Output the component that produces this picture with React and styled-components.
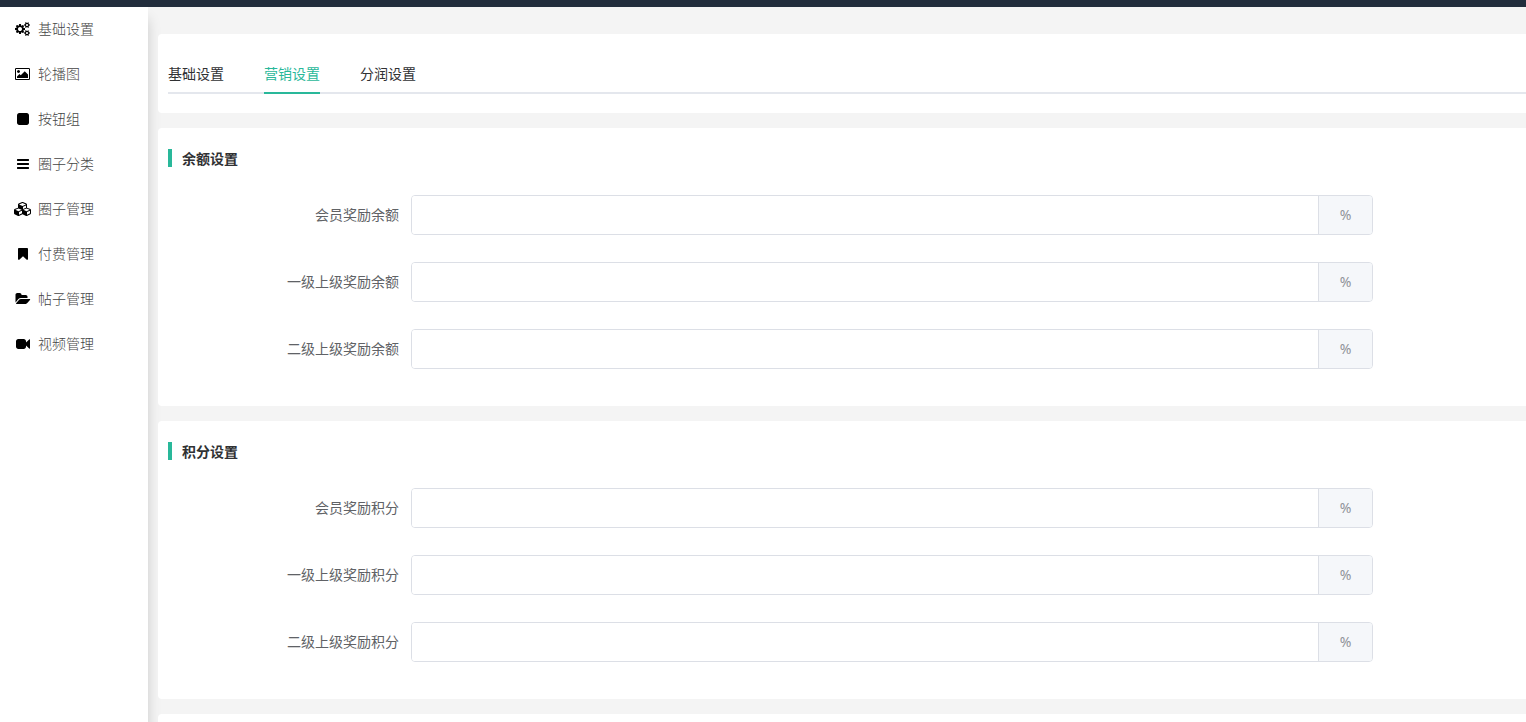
import React from "react";
import styled, { createGlobalStyle } from "styled-components";

const GlobalStyle = createGlobalStyle`
  * { box-sizing: border-box; }
  body {
    margin: 0;
    background: #f4f4f4;
    color: #303133;
    font-family: "Noto Sans CJK SC", sans-serif;
    font-size: 14px;
  }
`;

const Page = styled.div`
  display: flex;
  flex-direction: column;
  height: 100vh;
  overflow: hidden;
`;

const TopBar = styled.header`
  flex: none;
  height: 7px;
  background: #222d3c;
`;

const Body = styled.div`
  display: flex;
  flex: 1;
  min-height: 0;
  overflow: hidden;
`;

const Sidebar = styled.nav`
  display: flex;
  flex: none;
  flex-direction: column;
  gap: 3px;
  width: 148px;
  background: #fff;
  box-shadow: 0 12px 12px rgba(0, 0, 0, 0.17);
`;

const MenuLink = styled.a`
  display: flex;
  align-items: center;
  gap: 6px;
  height: 42px;
  padding-left: 14px;
  color: #444;
  font-weight: 300;
  text-decoration: none;
`;

const IconSlot = styled.span`
  display: flex;
  justify-content: center;
  width: 18px;
  padding-top: 2px;
  color: #000;
`;

const Main = styled.main`
  display: flex;
  flex: 1;
  flex-direction: column;
  gap: 15px;
  min-width: 0;
  padding: 27px 0 0 10px;
`;

const Panel = styled.section`
  flex: none;
  padding: 20px 10px 10px;
  border-radius: 4px 0 0 4px;
  background: #fff;
`;

const TabPanel = styled(Panel)`
  padding: 20px 0 19px 10px;
`;

const NextPanel = styled(Panel)`
  flex: 1;
  min-height: 0;
  padding: 0;
  border-radius: 4px 0 0 0;
`;

const Tabs = styled.div`
  display: flex;
  gap: 40px;
  height: 40px;
  box-shadow: inset 0 -2px #e4e7ed;
`;

const Tab = styled.button`
  height: 40px;
  padding: 0;
  border: 0;
  border-bottom: 2px solid ${(p) => (p.$active ? "#29b89a" : "transparent")};
  background: none;
  color: ${(p) => (p.$active ? "#29b89a" : "#303133")};
  font: inherit;
  line-height: 38px;
  cursor: pointer;
`;

const Title = styled.h2`
  display: flex;
  align-items: center;
  gap: 10px;
  height: 20px;
  margin: 0 0 27px;
  font-size: 14px;
  font-weight: 700;

  &::before {
    width: 4px;
    height: 18px;
    background: #29b89a;
    content: "";
  }
`;

const Row = styled.div`
  display: flex;
  align-items: flex-start;
  margin-bottom: 27px;
  padding-right: 143px;
`;

const Label = styled.label`
  flex: none;
  width: 243px;
  padding-right: 12px;
  color: #606266;
  line-height: 38px;
  text-align: right;
`;

const Group = styled.div`
  display: flex;
  flex: 1;
  height: 40px;
  overflow: hidden;
  border: 1px solid #dcdfe6;
  border-radius: 4px;
`;

const Field = styled.input`
  flex: 1;
  min-width: 0;
  padding: 0 15px;
  border: 0;
  outline: 0;
  background: #fff;
  color: #606266;
  font: inherit;
`;

const Unit = styled.span`
  width: 54px;
  border-left: 1px solid #dcdfe6;
  background: #f5f7fa;
  color: #909399;
  font-family: "Noto Sans", sans-serif;
  line-height: 38px;
  text-align: center;
`;

const smallCog =
  "v140q0 16-149 31-12 27-30 52 51 113 51 138 0 4-4 7-122 71-124 71-8 0-46-47t-52-68q-20 2-30 2t-30-2q-14 21-52 68t-46 47q-2 0-124-71-4-3-4-7 0-25 51-138-18-25-30-52-149-15-149-31v-140q0-16 149-31 13-29 30-52-51-113-51-138 0-4 4-7 4-2 35-20t59-34 30-16q8 0 46 46.5t52 67.5q20-2 30-2t30 2q51-71 92-112l6-2q4 0 124 70 4 3 4 7 0 25-51 138 17 23 30 52 149 15 149 31z";

// Each icon is drawn on a grid of 128 units to the pixel.
const icons = {
  cogs: {
    box: [0, 0, 1920, 1792],
    d:
      "M896 896q0-106-75-181t-181-75-181 75-75 181 75 181 181 75 181-75 75-181zm768 512q0-52-38-90t-90-38-90 38-38 90q0 53 37.5 90.5t90.5 37.5 90.5-37.5 37.5-90.5zm0-1024q0-52-38-90t-90-38-90 38-38 90q0 53 37.5 90.5t90.5 37.5 90.5-37.5 37.5-90.5zm-384 421v185q0 10-7 19.5t-16 10.5l-155 24q-11 35-32 76 34 48 90 115 7 11 7 20 0 12-7 19-23 30-82.5 89.5t-78.5 59.5q-11 0-21-7l-115-90q-37 19-77 31-11 108-23 155-7 24-30 24h-186q-11 0-20-7.5t-10-17.5l-23-153q-34-10-75-31l-118 89q-7 7-20 7-11 0-21-8-144-133-144-160 0-9 7-19 10-14 41-53t47-61q-23-44-35-82l-152-24q-10-1-17-9.5t-7-19.5v-185q0-10 7-19.5t16-10.5l155-24q11-35 32-76-34-48-90-115-7-11-7-20 0-12 7-20 22-30 82-89t79-59q11 0 21 7l115 90q34-18 77-32 11-108 23-154 7-24 30-24h186q11 0 20 7.5t10 17.5l23 153q34 10 75 31l118-89q8-7 20-7 11 0 21 8 144 133 144 160 0 8-7 19-12 16-42 54t-45 60q23 48 34 82l152 23q10 2 17 10.5t7 19.5z" +
      "M1920 1338" + smallCog + "M1920 314" + smallCog,
  },
  picture: {
    box: [-64, 0, 1920, 1792],
    d: "M576 576q0 80-56 136t-136 56-136-56-56-136 56-136 136-56 136 56 56 136zm1024 384v448h-1408v-192l320-320 160 160 512-512zm96-704h-1600q-13 0-22.5 9.5t-9.5 22.5v1216q0 13 9.5 22.5t22.5 9.5h1600q13 0 22.5-9.5t9.5-22.5v-1216q0-13-9.5-22.5t-22.5-9.5zm160 32v1216q0 66-47 113t-113 47h-1600q-66 0-113-47t-47-113v-1216q0-66 47-113t113-47h1600q66 0 113 47t47 113z",
  },
  square: {
    box: [128, 0, 1536, 1792],
    d: "M1664 416v960q0 119-84.5 203.5t-203.5 84.5h-960q-119 0-203.5-84.5t-84.5-203.5v-960q0-119 84.5-203.5t203.5-84.5h960q119 0 203.5 84.5t84.5 203.5z",
  },
  bars: {
    box: [128, 0, 1536, 1792],
    d: "M1664 1344v128q0 26-19 45t-45 19h-1408q-26 0-45-19t-19-45v-128q0-26 19-45t45-19h1408q26 0 45 19t19 45zm0-512v128q0 26-19 45t-45 19h-1408q-26 0-45-19t-19-45v-128q0-26 19-45t45-19h1408q26 0 45 19t19 45zm0-512v128q0 26-19 45t-45 19h-1408q-26 0-45-19t-19-45v-128q0-26 19-45t45-19h1408q26 0 45 19t19 45z",
  },
  cubes: {
    box: [0, 0, 2304, 1792],
    d: "M640 1632l384-192v-314l-384 164v342zm-64-454l404-173-404-173-404 173zm1088 454l384-192v-314l-384 164v342zm-64-454l404-173-404-173-404 173zm-448-293l384-165v-266l-384 164v267zm-64-379l441-189-441-189-441 189zm1088 518v416q0 36-19 67t-52 47l-448 224q-25 14-57 14t-57-14l-448-224q-4-2-7-4-2 2-7 4l-448 224q-25 14-57 14t-57-14l-448-224q-33-16-52-47t-19-67v-416q0-38 21.5-70t56.5-48l434-186v-400q0-38 21.5-70t56.5-48l448-192q23-10 50-10t50 10l448 192q35 16 56.5 48t21.5 70v400l434 186q36 16 57 48t21 70z",
  },
  bookmark: {
    box: [128, 0, 1536, 1792],
    d: "M1420 128q23 0 44 9 33 13 52.5 41t19.5 62v1289q0 34-19.5 62t-52.5 41q-19 8-44 8-48 0-83-32l-441-424-441 424q-36 33-83 33-23 0-44-9-33-13-52.5-41t-19.5-62v-1289q0-34 19.5-62t52.5-41q21-9 44-9h1048z",
  },
  folder: {
    box: [0, 0, 1920, 1792],
    d: "M1943 952q0 31-31 66l-336 396q-43 51-120.5 86.5t-143.5 35.5h-1088q-34 0-60.5-13t-26.5-43q0-31 31-66l336-396q43-51 120.5-86.5t143.5-35.5h1088q34 0 60.5 13t26.5 43zm-343-344v160h-832q-94 0-197 47.5t-164 119.5l-337 396-5 6q0-4-.5-12.5t-.5-12.5v-960q0-92 66-158t158-66h320q92 0 158 66t66 158v32h544q92 0 158 66t66 158z",
  },
  video: {
    box: [0, 0, 1792, 1792],
    d: "M1792 352v1088q0 42-39 59-13 5-25 5-27 0-45-19l-403-403v166q0 119-84.5 203.5t-203.5 84.5h-704q-119 0-203.5-84.5t-84.5-203.5v-704q0-119 84.5-203.5t203.5-84.5h704q119 0 203.5 84.5t84.5 203.5v165l403-402q18-19 45-19 12 0 25 5 39 17 39 59z",
  },
};

// Widths are rounded up to an even number so that a centred icon stays on whole pixels.
function Icon({ name }) {
  const { box, d } = icons[name];
  return (
    <svg
      width={2 * Math.ceil(box[2] / 256)}
      height={14}
      viewBox={box.join(" ")}
      preserveAspectRatio="xMinYMid meet"
      fill="currentColor"
      overflow="visible"
      aria-hidden="true"
    >
      <path d={d} />
    </svg>
  );
}

const menu = [
  ["cogs", "基础设置"],
  ["picture", "轮播图"],
  ["square", "按钮组"],
  ["bars", "圈子分类"],
  ["cubes", "圈子管理"],
  ["bookmark", "付费管理"],
  ["folder", "帖子管理"],
  ["video", "视频管理"],
];

const tabs = ["基础设置", "营销设置", "分润设置"];

const sections = [
  { id: "balance", title: "余额设置", fields: ["会员奖励余额", "一级上级奖励余额", "二级上级奖励余额"] },
  { id: "points", title: "积分设置", fields: ["会员奖励积分", "一级上级奖励积分", "二级上级奖励积分"] },
];

export default function App() {
  const [active, setActive] = React.useState(1);
  return (
    <Page>
      <GlobalStyle />
      <TopBar />
      <Body>
        <Sidebar>
          {menu.map(([icon, text]) => (
            <MenuLink href="#" key={text}>
              <IconSlot>
                <Icon name={icon} />
              </IconSlot>
              {text}
            </MenuLink>
          ))}
        </Sidebar>
        <Main>
          <TabPanel>
            <Tabs role="tablist">
              {tabs.map((text, i) => (
                <Tab
                  key={text}
                  type="button"
                  role="tab"
                  aria-selected={i === active}
                  $active={i === active}
                  onClick={() => setActive(i)}
                >
                  {text}
                </Tab>
              ))}
            </Tabs>
          </TabPanel>
          {sections.map(({ id, title, fields }) => (
            <Panel key={id}>
              <Title>{title}</Title>
              {fields.map((text, i) => (
                <Row key={text}>
                  <Label htmlFor={`${id}-${i}`}>{text}</Label>
                  <Group>
                    <Field id={`${id}-${i}`} type="text" />
                    <Unit>%</Unit>
                  </Group>
                </Row>
              ))}
            </Panel>
          ))}
          <NextPanel />
        </Main>
      </Body>
    </Page>
  );
}
